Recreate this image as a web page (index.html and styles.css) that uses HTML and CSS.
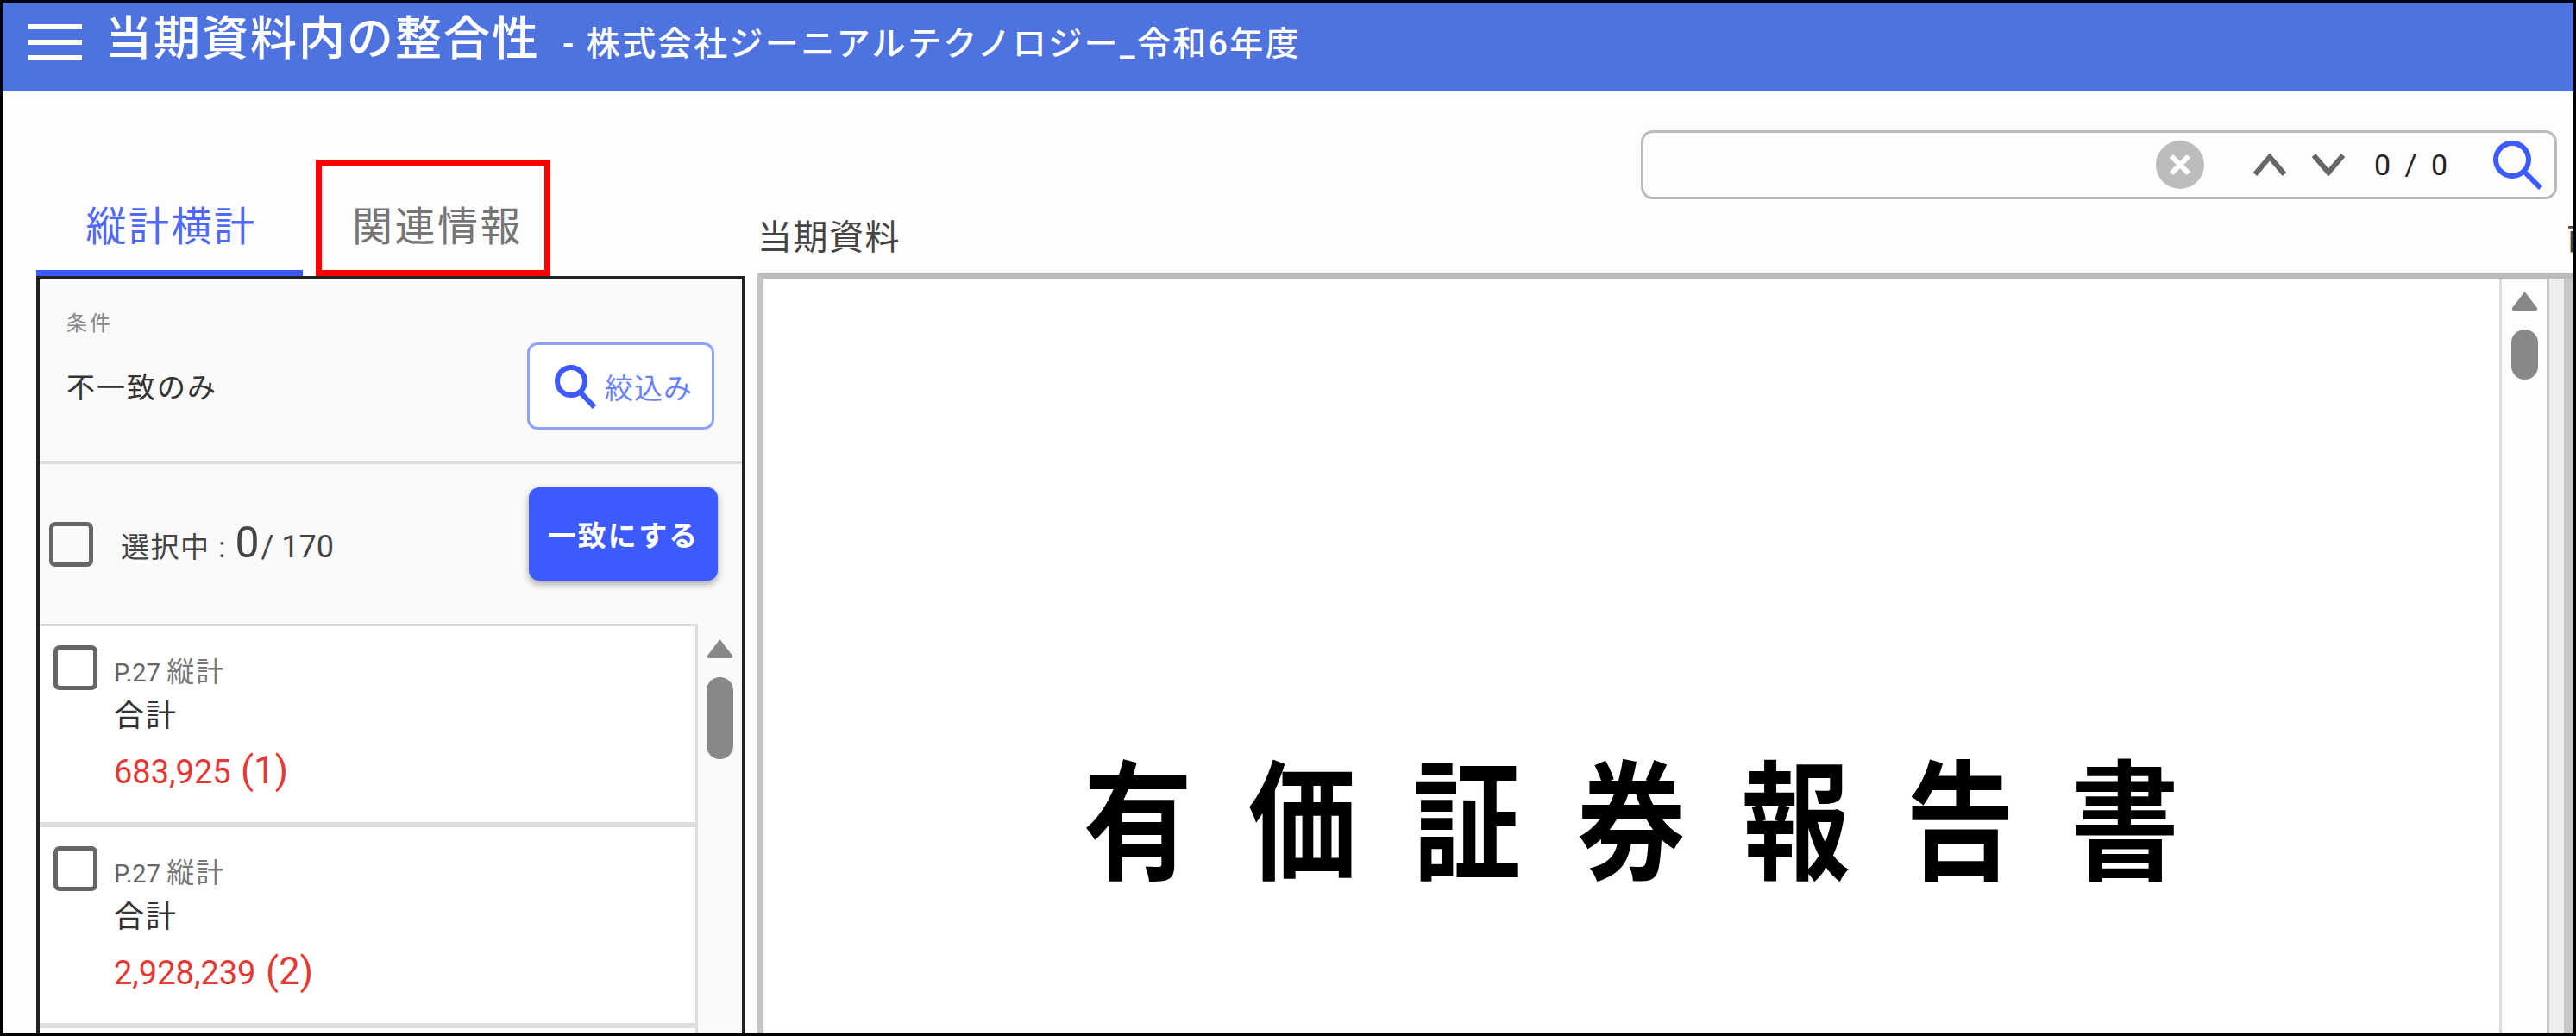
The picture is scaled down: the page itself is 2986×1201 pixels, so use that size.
FILE: index.html
```html
<!DOCTYPE html>
<html lang="ja">
<head>
<meta charset="utf-8">
<title>当期資料内の整合性</title>
<link rel="stylesheet" href="styles.css">
</head>
<body>
<div class="app">
  <header class="topbar">
    <div class="burger"><span></span><span></span><span></span></div>
    <h1 class="title">当期資料内の整合性</h1>
    <div class="subtitle">- 株式会社ジーニアルテクノロジー_令和6年度</div>
  </header>
  <div class="content">
    <section class="left">
      <div class="tabs">
        <div class="tab tab-active">縦計横計</div>
        <div class="tab tab-marked">関連情報</div>
      </div>
      <div class="panel">
        <div class="filter">
          <div class="filter-text">
            <div class="filter-label">条件</div>
            <div class="filter-value">不一致のみ</div>
          </div>
          <button class="btn-outline">
            <svg class="btn-icon" viewBox="0 0 50 52"><circle cx="20" cy="20" r="16" fill="none" stroke="#3d5afe" stroke-width="6"/><path d="M31 33 47 50" fill="none" stroke="#3d5afe" stroke-width="6"/></svg>
            <span>絞込み</span>
          </button>
        </div>
        <div class="selection">
          <span class="checkbox"></span>
          <div class="sel-text">選択中 : <span class="sel-num">0</span><span class="sel-total">/ 170</span></div>
          <button class="btn-primary">一致にする</button>
        </div>
        <div class="list-wrap">
          <div class="list">
            <article class="row">
              <span class="checkbox"></span>
              <div class="row-text">
                <div class="row-meta">P.27 <span class="row-kind">縦計</span></div>
                <div class="row-name">合計</div>
                <div class="row-val">683,925 <span class="row-count">(1)</span></div>
              </div>
            </article>
            <article class="row">
              <span class="checkbox"></span>
              <div class="row-text">
                <div class="row-meta">P.27 <span class="row-kind">縦計</span></div>
                <div class="row-name">合計</div>
                <div class="row-val">2,928,239 <span class="row-count">(2)</span></div>
              </div>
            </article>
          </div>
          <div class="scroll scroll-list">
            <svg class="scroll-arrow" viewBox="0 0 31 24"><path d="M15.5 1 30 20q1 3-2 3H3q-3 0-2-3Z" fill="#888"/></svg>
            <div class="scroll-thumb"></div>
          </div>
        </div>
      </div>
    </section>
    <section class="right">
      <div class="searchbar">
        <svg class="ic-clear" viewBox="0 0 56 56"><circle cx="28" cy="28" r="28" fill="#bcbcbc"/><path d="M18 18 38 38M38 18 18 38" stroke="#fff" stroke-width="6" fill="none"/></svg>
        <svg class="ic-chev" viewBox="0 0 40 26"><path d="M3 24 20 4 37 24" fill="none" stroke="#666" stroke-width="6"/></svg>
        <svg class="ic-chev" viewBox="0 0 40 26"><path d="M3 2 20 22 37 2" fill="none" stroke="#666" stroke-width="6"/></svg>
        <span class="count">0 / 0</span>
        <svg class="ic-search" viewBox="0 0 60 58"><circle cx="24" cy="23" r="19" fill="none" stroke="#3d5afe" stroke-width="6"/><path d="M38 37 57 56" fill="none" stroke="#3d5afe" stroke-width="6"/></svg>
      </div>
      <div class="panes">
        <div class="pane-main">
          <div class="pane-label">当期資料</div>
          <div class="doc">
            <div class="page"><div class="doc-title">有価証券報告書</div></div>
            <div class="scroll scroll-doc">
              <svg class="scroll-arrow" viewBox="0 0 31 24"><path d="M15.5 1 30 20q1 3-2 3H3q-3 0-2-3Z" fill="#888"/></svg>
              <div class="scroll-thumb"></div>
            </div>
            <div class="doc-gutter"></div>
          </div>
        </div>
        <div class="pane-next">
          <div class="pane-label">前期資料</div>
          <div class="doc-next"></div>
        </div>
      </div>
    </section>
  </div>
</div>
</body>
</html>
```
FILE: styles.css
```css
* { box-sizing: border-box; }
html, body { margin: 0; padding: 0; }
body {
  width: 2986px;
  height: 1201px;
  overflow: hidden;
  background: #fff;
  font-family: Roboto, "Noto Sans CJK JP", sans-serif;
}
.app {
  width: 2986px;
  height: 1201px;
  border: 3px solid #000;
  display: flex;
  flex-direction: column;
  overflow: hidden;
  background: #fdfdfd;
}
.topbar {
  height: 103px;
  flex: none;
  background: #4f73de;
  color: #fff;
  display: flex;
  align-items: center;
  padding: 0 0 18px 29px;
}
.burger { width: 63px; height: 42px; display: flex; flex-direction: column; justify-content: space-between; margin-top: 6px; }
.burger span { display: block; height: 6px; background: #fff; }
.title { margin: 0 0 0 27px; font-size: 54px; line-height: 60px; font-weight: 500; letter-spacing: 2px; }
.subtitle { margin: 10px 0 0 26px; font-size: 39px; line-height: 44px; font-weight: 500; letter-spacing: 2.4px; }

.content { flex: 1; min-height: 0; display: flex; }
.left { width: 821px; margin-left: 39px; flex: none; display: flex; flex-direction: column; }
.tabs { height: 214px; flex: none; display: flex; align-items: flex-end; }
.tab { font-size: 47px; line-height: 52px; letter-spacing: 2.5px; display: flex; justify-content: center; }
.tab-active { width: 309px; height: 135px; padding: 52px 0 0 4px; color: #4f68f5; border-bottom: 7px solid #3d5afe; }
.tab-marked { width: 272px; height: 135px; margin-left: 15px; padding: 45px 0 0 10px; color: #757575; border: 7px solid #f00; }

.panel { flex: 1; min-height: 0; border: 3px solid #222; border-bottom: 0; border-left-width: 4px; background: #fafafa; display: flex; flex-direction: column; }
.filter { height: 215px; flex: none; border-bottom: 3px solid #ddd; padding: 74px 32px 0 31px; display: flex; justify-content: space-between; align-items: flex-start; }
.filter-text { margin-top: -38px; }
.filter-label { font-size: 24px; line-height: 32px; color: #888; letter-spacing: 3px; }
.filter-value { margin-top: 37px; font-size: 33px; line-height: 44px; color: #333; letter-spacing: 2px; }
.btn-outline { width: 217px; height: 101px; background: #fff; border: 3px solid #8ea2ff; border-radius: 12px; padding: 0 0 0 28px; display: flex; align-items: center; color: #6a82f8; font: inherit; font-size: 33px; letter-spacing: 1px; white-space: nowrap; }
.btn-icon { width: 50px; height: 52px; margin-right: 9px; flex: none; }
.selection { height: 185px; flex: none; display: flex; align-items: center; padding: 0 28px 0 11px; }
.sel-text { margin: 2px 0 0 32px; flex: 1; font-size: 33px; line-height: 48px; color: #444; letter-spacing: 1.5px; white-space: nowrap; }
.sel-num { font-size: 50px; letter-spacing: 0; }
.sel-total { font-size: 36px; letter-spacing: 0; margin-left: 2px; }
.btn-primary { width: 219px; height: 108px; margin-top: -24px; border: 0; border-radius: 12px; background: #3d5afe; color: #fff; font: inherit; font-size: 33px; font-weight: 700; letter-spacing: 2px; box-shadow: 0 4px 8px rgba(0,0,0,.35); padding: 0; white-space: nowrap; }
.checkbox { display: block; width: 51px; height: 52px; flex: none; border: 5px solid #666; border-radius: 7px; background: transparent; }

.list-wrap { flex: 1; min-height: 0; display: flex; overflow: hidden; }
.list { width: 763px; flex: none; border-top: 3px solid #ddd; border-right: 3px solid #ddd; background: #fff; }
.row { height: 233px; border-bottom: 6px solid #ddd; padding: 22px 0 0 16px; display: flex; }
.row-text { margin-left: 19px; padding-top: 11px; }
.row-meta { font-size: 29px; line-height: 40px; color: #666; }
.row-kind { font-size: 32px; letter-spacing: 2px; color: #777; }
.row-name { margin-top: 6px; font-size: 35px; line-height: 50px; color: #333; letter-spacing: 2px; }
.row-val { margin-top: 12px; font-size: 38px; line-height: 50px; color: #e53935; white-space: nowrap; }
.row-count { font-size: 44px; margin-left: 2px; }

.scroll { flex: none; display: flex; flex-direction: column; align-items: center; }
.scroll-arrow { width: 31px; height: 24px; flex: none; }
.scroll-thumb { width: 31px; border-radius: 16px; background: #888; }
.scroll-list { width: 47px; padding: 17px 0 0 0; margin-left: 2px; }
.scroll-list .scroll-thumb { height: 95px; margin-top: 21px; }

.right { flex: 1; min-width: 0; margin-left: 15px; display: flex; flex-direction: column; }
.searchbar { flex: none; align-self: flex-end; width: 1062px; height: 80px; margin: 45px 19px 0 0; border: 3px solid #bbb; border-radius: 14px; display: flex; align-items: center; padding-right: 13px; }
.ic-clear { width: 56px; height: 56px; margin-left: auto; flex: none; }
.ic-chev { width: 40px; height: 26px; flex: none; }
.ic-chev + .ic-chev { margin-left: 28px; }
.ic-clear + .ic-chev { margin-left: 56px; }
.count { margin-left: 33px; font-size: 34px; line-height: 40px; color: #222; letter-spacing: 4px; white-space: nowrap; }
.ic-search { width: 60px; height: 58px; flex: none; margin-left: 47px; }

.panes { flex: 1; min-height: 0; display: flex; }
.pane-main { width: 2094px; flex: none; display: flex; flex-direction: column; }
.pane-next { flex: 1; min-width: 0; overflow: hidden; display: flex; flex-direction: column; }
.pane-label { height: 86px; flex: none; padding: 20px 0 0 0; font-size: 40px; line-height: 50px; color: #444; letter-spacing: 1.5px; white-space: nowrap; }
.pane-next .pane-label { padding-left: 3px; }
.doc-next { flex: 1; background: #c6c6c6; border-top: 6px solid #bbb; }
.doc { flex: 1; min-height: 0; display: flex; border-top: 6px solid #bbb; border-left: 7px solid #c4c4c4; background: #fff; }
.page { flex: 1; min-width: 0; background: #fff; padding-top: 530px; text-align: center; overflow: hidden; }
.doc-title { font-family: "Noto Sans CJK JP", sans-serif; font-size: 150px; line-height: 180px; font-weight: 700; color: #000; letter-spacing: 77px; white-space: nowrap; padding-left: 77px; transform: scaleX(.84); }
.scroll-doc { width: 58px; border-left: 3px solid #ddd; border-right: 3px solid #c4c4c4; padding-top: 14px; background: #fdfdfd; }
.scroll-doc .scroll-thumb { height: 58px; margin-top: 21px; }
.doc-gutter { width: 17px; flex: none; background: #eee; }
```
